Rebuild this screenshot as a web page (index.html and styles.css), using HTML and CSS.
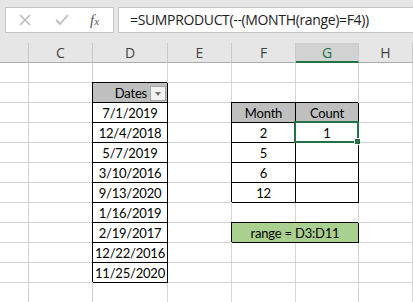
FILE: index.html
```html
<!DOCTYPE html>
<html lang="en">
<head>
    <meta charset="UTF-8">
    <meta name="viewport" content="width=device-width, initial-scale=1.0">
    <title>SUMPRODUCT by month</title>
    <link rel="stylesheet" href="styles.css">
</head>
<body>
    <div class="toolbar">
        <div class="namebox">
            <svg class="icon" width="14" height="14" viewBox="0 0 14 14">
                <path d="M2 2 L12 12 M12 2 L2 12" stroke="#bcbcbc" stroke-width="1.6" fill="none"/>
            </svg>
            <svg class="icon" width="16" height="14" viewBox="0 0 16 14">
                <path d="M2 7 L6 11 L14 2" stroke="#bcbcbc" stroke-width="1.8" fill="none"/>
            </svg>
            <span class="fx">f<small>x</small></span>
        </div>
        <div class="formula">=SUMPRODUCT(--(MONTH(range)=F4))</div>
    </div>

    <div class="sheet">
        <!-- column headers -->
        <div class="colhead"></div>
        <div class="colhead">C</div>
        <div class="colhead">D</div>
        <div class="colhead">E</div>
        <div class="colhead">F</div>
        <div class="colhead active">G</div>
        <div class="colhead">H</div>

        <!-- row 1 -->
        <div class="c"></div><div class="c"></div><div class="c"></div><div class="c"></div><div class="c"></div><div class="c"></div><div class="c"></div>

        <!-- row 2 -->
        <div class="c"></div><div class="c"></div>
        <div class="c tb hd filter">Dates <span class="dropdown"></span></div>
        <div class="c"></div><div class="c"></div><div class="c"></div><div class="c"></div>

        <!-- row 3 -->
        <div class="c"></div><div class="c"></div>
        <div class="c tb">7/1/2019</div>
        <div class="c"></div>
        <div class="c tb hd">Month</div>
        <div class="c tb hd">Count</div>
        <div class="c"></div>

        <!-- row 4 -->
        <div class="c"></div><div class="c"></div>
        <div class="c tb">12/4/2018</div>
        <div class="c"></div>
        <div class="c tb">2</div>
        <div class="c tb sel">1</div>
        <div class="c"></div>

        <!-- row 5 -->
        <div class="c"></div><div class="c"></div>
        <div class="c tb">5/7/2019</div>
        <div class="c"></div>
        <div class="c tb">5</div>
        <div class="c tb"></div>
        <div class="c"></div>

        <!-- row 6 -->
        <div class="c"></div><div class="c"></div>
        <div class="c tb">3/10/2016</div>
        <div class="c"></div>
        <div class="c tb">6</div>
        <div class="c tb"></div>
        <div class="c"></div>

        <!-- row 7 -->
        <div class="c"></div><div class="c"></div>
        <div class="c tb">9/13/2020</div>
        <div class="c"></div>
        <div class="c tb">12</div>
        <div class="c tb"></div>
        <div class="c"></div>

        <!-- row 8 -->
        <div class="c"></div><div class="c"></div>
        <div class="c tb">1/16/2019</div>
        <div class="c"></div><div class="c"></div><div class="c"></div><div class="c"></div>

        <!-- row 9 -->
        <div class="c"></div><div class="c"></div>
        <div class="c tb">2/19/2017</div>
        <div class="c"></div>
        <div class="c tb green span2">range = D3:D11</div>
        <div class="c"></div>

        <!-- row 10 -->
        <div class="c"></div><div class="c"></div>
        <div class="c tb">12/22/2016</div>
        <div class="c"></div><div class="c"></div><div class="c"></div><div class="c"></div>

        <!-- row 11 -->
        <div class="c"></div><div class="c"></div>
        <div class="c tb">11/25/2020</div>
        <div class="c"></div><div class="c"></div><div class="c"></div><div class="c"></div>

        <!-- row 12 -->
        <div class="c"></div><div class="c"></div><div class="c"></div><div class="c"></div><div class="c"></div><div class="c"></div><div class="c"></div>
    </div>
</body>
</html>
```

FILE: styles.css
```css
body {
    margin: 0;
    width: 413px;
    height: 302px;
    overflow: hidden;
    background: #fff;
    font-family: Lato, 'Open Sans', sans-serif;
}

.toolbar {
    display: flex;
    height: 43px;
    box-sizing: border-box;
    padding: 7px 0 0 5px;
    background: #e6e6e6;
}

.namebox {
    width: 109px;
    height: 26px;
    box-sizing: border-box;
    background: #fff;
    border: 1px solid #c6c6c6;
    display: flex;
    align-items: center;
    padding-left: 12px;
    gap: 22px;
}

.fx {
    font-family: 'Liberation Serif', serif;
    font-style: italic;
    font-size: 15px;
    color: #555;
    margin-left: -2px;
}

.fx small {
    font-size: 11px;
}

.formula {
    flex: 1;
    height: 26px;
    box-sizing: border-box;
    margin-left: 4px;
    background: #fff;
    border: 1px solid #c6c6c6;
    border-right: none;
    font-family: 'Open Sans', sans-serif;
    font-size: 14px;
    letter-spacing: -0.35px;
    line-height: 24px;
    padding-left: 11px;
    color: #222;
}

.sheet {
    display: grid;
    grid-template-columns: 29px 64px 75px 64px 64px 63px 1fr;
    grid-auto-rows: 20px;
}

.colhead {
    background: #e6e6e6;
    border-right: 1px solid #c8c8c8;
    border-bottom: 1px solid #ababab;
    box-sizing: border-box;
    text-align: center;
    font-family: 'Open Sans', sans-serif;
    font-size: 14px;
    line-height: 19px;
    color: #444;
}

.colhead.active {
    background: #d2d2d2;
    border-bottom: 2px solid #217346;
    color: #217346;
}

.c {
    box-sizing: border-box;
    border-right: 1px solid #d4d4d4;
    border-bottom: 1px solid #d4d4d4;
    font-size: 13px;
    letter-spacing: -0.2px;
    line-height: 21px;
    text-align: center;
    color: #000;
    white-space: nowrap;
}

.tb {
    border-color: #000;
    box-shadow: -1px -1px 0 #000;
}

.hd {
    background: #bfbfbf;
}

.filter {
    position: relative;
    text-align: right;
    padding-right: 20px;
}

.dropdown {
    position: absolute;
    right: 1px;
    top: 3px;
    width: 16px;
    height: 15px;
    box-sizing: border-box;
    background: #f3f3f3;
    border: 1px solid #a6a6a6;
}

.dropdown::after {
    content: "";
    position: absolute;
    left: 4px;
    top: 5px;
    border-left: 3.5px solid transparent;
    border-right: 3.5px solid transparent;
    border-top: 4px solid #777;
}

.sel {
    position: relative;
}

.sel::before {
    content: "";
    position: absolute;
    left: -2px;
    top: -2px;
    right: -1px;
    bottom: -1px;
    border: 2px solid #217346;
}

.sel::after {
    content: "";
    position: absolute;
    right: -3px;
    bottom: -3px;
    width: 5px;
    height: 5px;
    background: #217346;
    border: 1px solid #fff;
}

.green {
    background: #a9d08e;
}

.span2 {
    grid-column: span 2;
}
```
